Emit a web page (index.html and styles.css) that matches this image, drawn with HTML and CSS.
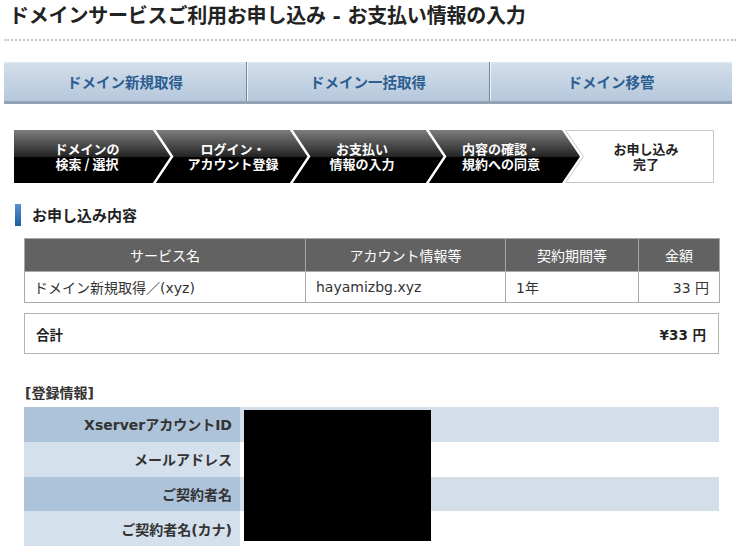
FILE: index.html
```html
<!DOCTYPE html>
<html lang="ja">
<head>
<meta charset="utf-8">
<title>お支払い情報の入力</title>
<link rel="stylesheet" href="styles.css">
</head>
<body>
<h1 class="page-title">ドメインサービスご利用お申し込み - お支払い情報の入力</h1>
<div class="rule"></div>

<nav class="tabs">
  <a class="tab">ドメイン新規取得</a>
  <a class="tab">ドメイン一括取得</a>
  <a class="tab">ドメイン移管</a>
</nav>

<div class="steps">
  <svg class="steps-bg" width="700" height="53" viewBox="0 0 700 53" aria-hidden="true">
    <defs>
      <linearGradient id="stepg" x1="0" y1="0" x2="0" y2="1">
        <stop offset="0" stop-color="#7d7d7d"/>
        <stop offset="0.5" stop-color="#242424"/>
        <stop offset="0.5" stop-color="#000"/>
        <stop offset="1" stop-color="#000"/>
      </linearGradient>
    </defs>
    <polygon points="0,0 548,0 566,26.5 548,53 0,53" fill="url(#stepg)"/>
    <polyline points="139,-2 158,26.5 139,55" fill="none" stroke="#fff" stroke-width="2.5"/>
    <polyline points="276,-2 295,26.5 276,55" fill="none" stroke="#fff" stroke-width="2.5"/>
    <polyline points="412,-2 431,26.5 412,55" fill="none" stroke="#fff" stroke-width="2.5"/>
    <polygon points="551.5,0.5 699.5,0.5 699.5,52.5 551.5,52.5 569.5,26.5" fill="#fff" stroke="#c8c8c8"/>
  </svg>
  <ol class="step-labels">
    <li class="step s1">ドメインの<br>検索 / 選択</li>
    <li class="step s2">ログイン・<br>アカウント登録</li>
    <li class="step s3">お支払い<br>情報の入力</li>
    <li class="step s4">内容の確認・<br>規約への同意</li>
    <li class="step s5 last">お申し込み<br>完了</li>
  </ol>
</div>

<h2 class="section-title">お申し込み内容</h2>

<table class="order">
  <colgroup>
    <col class="c1"><col class="c2"><col class="c3"><col class="c4">
  </colgroup>
  <thead>
    <tr><th>サービス名</th><th>アカウント情報等</th><th>契約期間等</th><th>金額</th></tr>
  </thead>
  <tbody>
    <tr><td>ドメイン新規取得／(xyz)</td><td>hayamizbg.xyz</td><td>1年</td><td class="num">33 円</td></tr>
  </tbody>
</table>

<div class="total">
  <span>合計</span>
  <span>¥33 円</span>
</div>

<p class="reg-title">[登録情報]</p>

<div class="reg-wrap">
  <table class="reg">
    <tr class="odd"><th>XserverアカウントID</th><td></td></tr>
    <tr class="even"><th>メールアドレス</th><td></td></tr>
    <tr class="odd"><th>ご契約者名</th><td></td></tr>
    <tr class="even"><th>ご契約者名(カナ)</th><td></td></tr>
  </table>
  <div class="redact"></div>
</div>
</body>
</html>
```

FILE: styles.css
```css
body {
  margin: 0;
  background: #fff;
  color: #222;
  font-family: "DejaVu Sans", "Noto Sans CJK JP", sans-serif;
}

.page-title {
  margin: 0;
  padding: 2px 0 0 9px;
  font-size: 20px;
  line-height: 28px;
  font-weight: bold;
  color: #222;
  letter-spacing: -0.2px;
}

.rule {
  margin: 9px 0 0 4px;
  border-top: 2px dotted #c4c4c4;
}

.tabs {
  display: flex;
  margin: 21px 0 0 4px;
  width: 728px;
  height: 42px;
  box-sizing: border-box;
  border-bottom: 3px solid #94a4b4;
  background: linear-gradient(#e2e9f1 0, #d2dde9 2px, #b5c8dc 100%);
}

.tab {
  flex: 1;
  display: flex;
  align-items: center;
  justify-content: center;
  font-family: "Noto Sans CJK JP", sans-serif;
  font-size: 14.5px;
  font-weight: bold;
  color: #2d5e92;
}

.tab + .tab {
  box-shadow: inset 1px 0 0 #eef3f8;
  border-left: 1px solid #74889c;
}

.steps {
  display: grid;
  margin: 26px 0 0 14px;
  width: 700px;
  height: 53px;
}

.steps-bg {
  grid-area: 1 / 1;
  display: block;
}

.step-labels {
  grid-area: 1 / 1;
  display: flex;
  margin: 0;
  padding: 0;
  list-style: none;
}

.step {
  padding-top: 11px;
  text-align: center;
  font-family: "Noto Sans CJK JP", sans-serif;
  font-size: 13px;
  line-height: 15px;
  font-weight: bold;
  color: #fff;
  white-space: nowrap;
}

.s1 { width: 146px; }
.s2 { width: 146px; }
.s3 { width: 112px; }
.s4 { width: 166px; }
.s5 { width: 124px; }

.step.last {
  color: #222;
}

.section-title {
  margin: 21px 0 0 15px;
  padding-left: 11px;
  height: 22px;
  line-height: 22px;
  font-family: "Noto Sans CJK JP", sans-serif;
  font-size: 15px;
  font-weight: bold;
  color: #222;
  border-left: 6px solid #2f6db3;
  border-image: linear-gradient(#5b93d2, #1c5aa3) 1;
}

.order {
  margin: 12px 0 0 24px;
  width: 695px;
  border-collapse: collapse;
  table-layout: fixed;
  font-size: 14px;
  font-family: "DejaVu Sans", "Noto Sans CJK JP", sans-serif;
}

.order .c1 { width: 281px; }
.order .c2 { width: 200px; }
.order .c3 { width: 133px; }
.order .c4 { width: 81px; }

.order th {
  height: 32px;
  padding: 0;
  background: #626262;
  color: #fff;
  font-weight: normal;
  border: 1px solid #a8a8a8;
  font-family: "Noto Sans CJK JP", sans-serif;
}

.order td {
  height: 30px;
  padding: 0 10px;
  border: 1px solid #a8a8a8;
  color: #333;
  white-space: nowrap;
}

.order td:first-child {
  padding-left: 9px;
}

.order td.num {
  text-align: right;
}

.total {
  display: flex;
  justify-content: space-between;
  align-items: center;
  margin: 10px 0 0 24px;
  width: 695px;
  height: 41px;
  box-sizing: border-box;
  padding: 0 12px 0 11px;
  border: 1px solid #b4b4b4;
  font-size: 13.5px;
  font-weight: bold;
  color: #222;
}

.reg-title {
  margin: 29px 0 0 25px;
  line-height: 20px;
  font-size: 14px;
  font-weight: bold;
  color: #333;
}

.reg-wrap {
  position: relative;
  margin: 4px 0 0 24px;
  width: 695px;
}

.reg {
  width: 695px;
  border-collapse: collapse;
  table-layout: fixed;
}

.reg th {
  width: 216px;
  height: 34.75px;
  padding: 0 8px 0 0;
  text-align: right;
  font-size: 14px;
  font-weight: bold;
  color: #333;
  box-sizing: border-box;
}

.reg td {
  padding: 0;
}

.reg .odd th { background: #adc3d9; }
.reg .odd td { background: #d3dee8; }
.reg .even th { background: #d4e0eb; }
.reg .even td { background: #fff; }

.redact {
  position: absolute;
  left: 220px;
  top: 3px;
  width: 187px;
  height: 131px;
  background: #000;
}
```
